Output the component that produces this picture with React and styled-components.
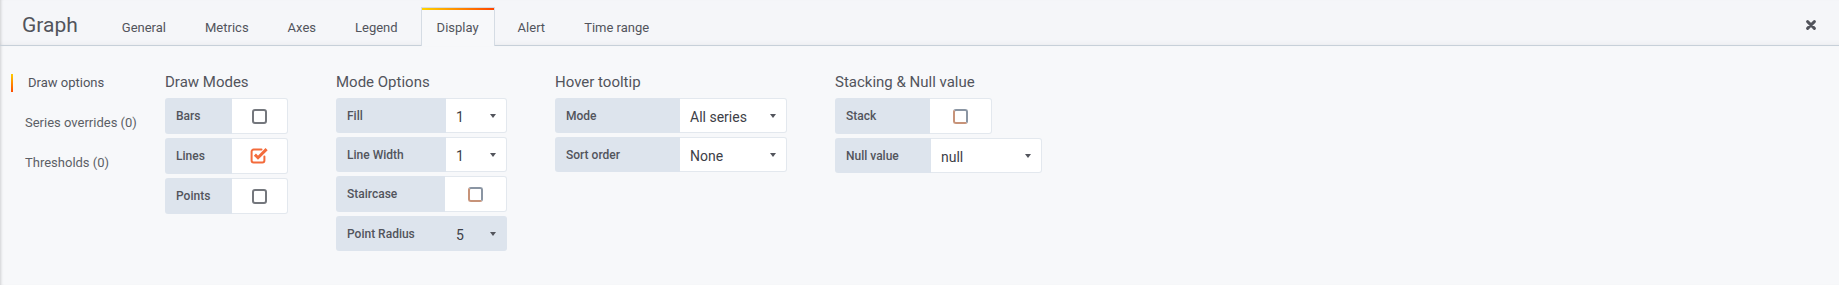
import React from 'react';
import styled, { createGlobalStyle, css } from 'styled-components';

const Global = createGlobalStyle`
  html, body { margin: 0; padding: 0; background: #f7f8fa; }
  body { font-family: Roboto, "Noto Sans", "Liberation Sans", sans-serif; }
  * { box-sizing: border-box; }
`;

const Panel = styled.div`
  width: 1839px;
  height: 285px;
  background: #f7f8fa;
  display: flex;
  flex-direction: column;
  overflow: hidden;
`;

const Header = styled.header`
  height: 46px;
  flex: 0 0 46px;
  border-bottom: 1px solid #c7d0d9;
  background: #f5f6f9;
  display: flex;
  align-items: flex-end;
  padding: 0 23px 0 22px;
  box-shadow: inset 3px 0 3px -2px rgba(0, 0, 0, 0.16),
    inset 0 -6px 6px -6px rgba(0, 0, 0, 0.06);
`;

const Title = styled.h2`
  margin: 0 28px 0 0;
  align-self: stretch;
  display: flex;
  align-items: center;
  padding-top: 4px;
  font-size: 21px;
  font-weight: 400;
  color: #52545c;
`;

const Tabs = styled.nav`
  display: flex;
  gap: 7px;
  flex: 1;
`;

const Tab = styled.div`
  height: 39px;
  margin-bottom: -1px;
  padding: 0 15px;
  display: flex;
  align-items: center;
  font-size: 13px;
  color: #52545c;
  border: 1px solid transparent;
  border-bottom: 0;
  ${(p) =>
    p.$active &&
    css`
      border-color: #d5dce4;
      background: linear-gradient(90deg, #ffd500 0%, #ff4400 100%) 0 0 / 100% 3px no-repeat border-box,
        #f7f8fa;
    `}
`;

const Close = styled.button`
  align-self: stretch;
  display: flex;
  align-items: center;
  padding: 5px 0 0;
  border: 0;
  background: none;
  color: #52545c;
  cursor: pointer;
`;

const Body = styled.main`
  flex: 1;
  display: flex;
  box-shadow: inset 3px 0 3px -2px rgba(0, 0, 0, 0.16);
`;

const Sidebar = styled.ul`
  flex: 0 0 165px;
  margin: 0;
  padding: 28px 0 0;
  list-style: none;
  display: flex;
  flex-direction: column;
  gap: 22px;
`;

const SideItem = styled.li`
  font-size: 13px;
  line-height: 18px;
  color: #5c5f66;
  padding-left: 25px;
  ${(p) =>
    p.$active &&
    css`
      color: #52545c;
      margin-left: 11px;
      padding-left: 15px;
      border-left: 2px solid #ff8800;
      border-image: linear-gradient(180deg, #ffd500 0%, #ff4400 100%) 1;
    `}
`;

const Sections = styled.div`
  display: flex;
  gap: 48px;
  padding-top: 27px;
`;

const Section = styled.section`
  display: flex;
  flex-direction: column;
`;

const Heading = styled.h5`
  margin: 0 0 7px;
  font-size: 15px;
  line-height: 18px;
  font-weight: 400;
  color: #52545c;
`;

const Rows = styled.div`
  display: flex;
  flex-direction: column;
  gap: 4px;
`;

const Row = styled.div`
  display: flex;
  height: ${(p) => p.$h || 35}px;
`;

const Label = styled.div`
  width: ${(p) => p.$w}px;
  background: #dde4ed;
  border-radius: 3px 0 0 3px;
  padding-left: 11px;
  display: flex;
  align-items: center;
  font-size: 12px;
  font-weight: 500;
  color: #52545c;
`;

const CheckCell = styled.div`
  width: ${(p) => p.$w}px;
  background: #fff;
  border: 1px solid #e3e8ee;
  border-left: 0;
  border-radius: 0 3px 3px 0;
  display: flex;
  align-items: center;
  justify-content: center;
`;

const Box = styled.span`
  width: 15px;
  height: 15px;
  border: 2px solid #74777d;
  border-radius: 3px;
  ${(p) =>
    p.$tinted &&
    css`
      border-color: #8a95a3 #8a95a3 #c79379 #c79379;
    `}
`;

const CheckIcon = styled.svg`
  margin: 0 0 2px 0;
`;

const Select = styled.div`
  width: ${(p) => p.$w}px;
  background: ${(p) => (p.$muted ? '#dde4ed' : '#fff')};
  border: 1px solid ${(p) => (p.$muted ? '#dde4ed' : '#e3e8ee')};
  border-left: 0;
  border-radius: 0 3px 3px 0;
  padding: 2px 10px 0 10px;
  display: flex;
  align-items: center;
  justify-content: space-between;
  font-size: 14px;
  color: #3d4047;
`;

const Caret = styled.span`
  width: 0;
  height: 0;
  border-left: 3.5px solid transparent;
  border-right: 3.5px solid transparent;
  border-top: 4px solid #52545c;
  margin-top: -2px;
`;

const Checked = () => (
  <CheckIcon width="19" height="17" viewBox="0 0 19 17" fill="none" stroke="#f36b3b">
    <path
      d="M11.5 2.6 H3.6 a2 2 0 0 0 -2 2 V13.4 a2 2 0 0 0 2 2 H12.4 a2 2 0 0 0 2 -2 V9.6"
      strokeWidth="2"
      strokeLinecap="round"
    />
    <path d="M4.9 7.6 L8 10.7 L16.6 2.1" strokeWidth="3" strokeLinejoin="miter" />
  </CheckIcon>
);

const CheckRow = ({ label, lw, cw, checked, tinted }) => (
  <Row $h={36}>
    <Label $w={lw}>{label}</Label>
    <CheckCell $w={cw}>{checked ? <Checked /> : <Box $tinted={tinted} />}</CheckCell>
  </Row>
);

const SelectRow = ({ label, lw, sw, value, muted }) => (
  <Row>
    <Label $w={lw}>{label}</Label>
    <Select $w={sw} $muted={muted}>
      <span>{value}</span>
      <Caret />
    </Select>
  </Row>
);

const tabs = ['General', 'Metrics', 'Axes', 'Legend', 'Display', 'Alert', 'Time range'];

export default function App() {
  return (
    <>
      <Global />
      <Panel>
        <Header>
          <Title>Graph</Title>
          <Tabs>
            {tabs.map((t) => (
              <Tab key={t} $active={t === 'Display'}>
                {t}
              </Tab>
            ))}
          </Tabs>
          <Close aria-label="Close">
            <svg width="10" height="10" viewBox="0 0 10 10">
              <path
                d="M1.6 1.6 L8.4 8.4 M8.4 1.6 L1.6 8.4"
                stroke="currentColor"
                strokeWidth="2.9"
                strokeLinecap="round"
              />
            </svg>
          </Close>
        </Header>
        <Body>
          <Sidebar>
            <SideItem $active>Draw options</SideItem>
            <SideItem>Series overrides (0)</SideItem>
            <SideItem>Thresholds (0)</SideItem>
          </Sidebar>
          <Sections>
            <Section>
              <Heading>Draw Modes</Heading>
              <Rows>
                <CheckRow label="Bars" lw={67} cw={56} />
                <CheckRow label="Lines" lw={67} cw={56} checked />
                <CheckRow label="Points" lw={67} cw={56} />
              </Rows>
            </Section>
            <Section>
              <Heading>Mode Options</Heading>
              <Rows>
                <SelectRow label="Fill" lw={110} sw={61} value="1" />
                <SelectRow label="Line Width" lw={110} sw={61} value="1" />
                <CheckRow label="Staircase" lw={109} cw={62} tinted />
                <SelectRow label="Point Radius" lw={110} sw={61} value="5" muted />
              </Rows>
            </Section>
            <Section>
              <Heading>Hover tooltip</Heading>
              <Rows>
                <SelectRow label="Mode" lw={125} sw={107} value="All series" />
                <SelectRow label="Sort order" lw={125} sw={107} value="None" />
              </Rows>
            </Section>
            <Section>
              <Heading>Stacking &amp; Null value</Heading>
              <Rows>
                <CheckRow label="Stack" lw={95} cw={62} tinted />
                <SelectRow label="Null value" lw={96} sw={111} value="null" />
              </Rows>
            </Section>
          </Sections>
        </Body>
      </Panel>
    </>
  );
}
